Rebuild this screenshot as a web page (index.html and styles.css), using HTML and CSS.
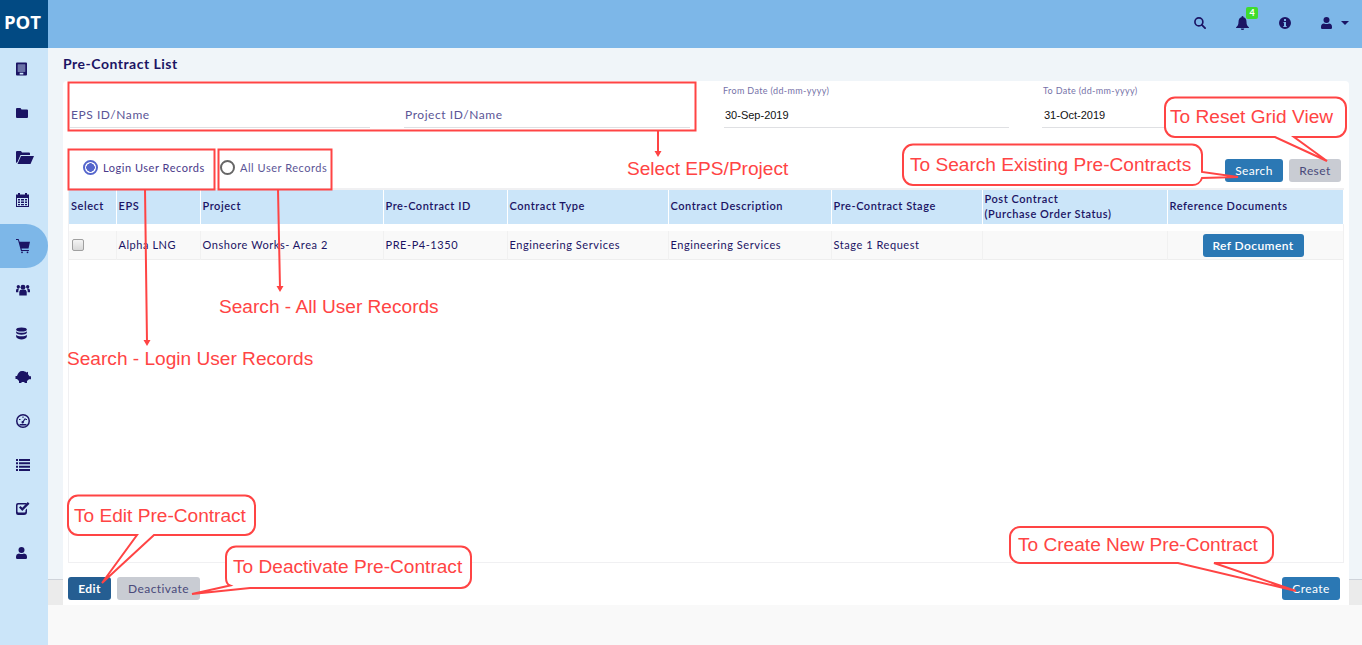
FILE: index.html
```html
<!DOCTYPE html>
<html lang="en">
<head>
<meta charset="utf-8">
<title>Pre-Contract List</title>
<link rel="stylesheet" href="styles.css">
</head>
<body>
<div class="app">
  <aside class="sidebar">
    <div class="logo">POT</div>
    <nav class="side-nav">
      <a class="side-item"><svg class="ic" viewBox="0 0 12 14"><path fill-rule="evenodd" d="M1 0h10a1 1 0 0 1 1 1v12a1 1 0 0 1-1 1H1a1 1 0 0 1-1-1V1a1 1 0 0 1 1-1zM2 2v8h8V2zM4 11v2h4v-2z"/><path d="M2 2h8v8H2z" opacity=".55"/></svg></a>
      <a class="side-item"><svg class="ic" viewBox="0 0 12 10"><path d="M1 0h3.500l1 1.500H11a1 1 0 0 1 1 1V9a1 1 0 0 1-1 1H1a1 1 0 0 1-1-1V1a1 1 0 0 1 1-1z"/></svg></a>
      <a class="side-item wide"><svg class="ic" viewBox="0 0 18 13"><path d="M1 0h4l1 1.500h7a1 1 0 0 1 1 1V4H4.500L1.500 11 0 12V1a1 1 0 0 1 1-1z"/><path d="M5 5h13l-3.500 8H1.500z"/></svg></a>
      <a class="side-item"><svg class="ic" viewBox="0 0 13 14"><path fill-rule="evenodd" d="M2 0h2v1.500h5V0h2v1.500h2V14H0V1.500h2zM1 5v8h11V5z"/><path d="M2 6h2v1.500H2zM5 6h3v1.500H5zM9 6h2v1.500H9zM2 8.500h2V10H2zM5 8.500h3V10H5zM9 8.500h2V10H9zM2 11h2v1.300H2zM5 11h3v1.300H5zM9 11h2v1.300H9z"/></svg></a>
      <a class="side-item active"><svg class="ic" viewBox="0 0 14 14"><path d="M0 0h2.600l1 2.800H14l-1.500 6.700H5.500l.4 1.500h7v1H5L2 1H0z"/><circle cx="6" cy="13.300" r=".9"/><circle cx="11.500" cy="13.300" r=".9"/></svg></a>
      <a class="side-item wide"><svg class="ic" viewBox="0 0 15 13"><circle cx="7.500" cy="4" r="2.600"/><circle cx="2.500" cy="3.500" r="1.800"/><circle cx="12.500" cy="3.500" r="1.800"/><path d="M3.500 13V9a3 3 0 0 1 3-2.500h2A3 3 0 0 1 11.500 9v4zM0 9.500V7.500a2 2 0 0 1 2-2h1.500a4 4 0 0 0-1 3v1zM15 9.500V7.500a2 2 0 0 0-2-2h-1.500a4 4 0 0 1 1 3v1z"/></svg></a>
      <a class="side-item"><svg class="ic" viewBox="0 0 12 13"><ellipse cx="6" cy="2.200" rx="5.800" ry="2.200"/><path d="M.2 4c1 1.300 3 1.800 5.800 1.800S10.800 5.300 11.800 4v2c-1 1.300-3 1.800-5.800 1.800S1.200 7.300.2 6zM.2 7.800C1.200 9 3.200 9.500 6 9.500s4.800-.5 5.800-1.700v2.600C11 12 8.500 13 6 13s-5-1-5.800-2.600z"/></svg></a>
      <a class="side-item wide"><svg class="ic" viewBox="0 0 17 12"><path d="M7 0c2 0 3.500.5 4.500 1.500L13 .8v2.500l1.500 2H16v3h-2L12 10v2H9.500v-1h-3v1H4v-2L2 8H.5V5H2C3 2 4.500 0 7 0z"/></svg></a>
      <a class="side-item"><svg class="ic" viewBox="0 0 14 14"><path fill-rule="evenodd" d="M7 0a7 7 0 1 1 0 14A7 7 0 0 1 7 0zm0 1.500a5.500 5.500 0 1 0 0 11 5.500 5.500 0 0 0 0-11z"/><path d="M6.500 2.500h1v1.500h-1zM3 5h1.500v1H3zM9.500 5H11v1H9.500zM9 4l.8.6L7.800 7.800a1.200 1.200 0 1 1-1-.7zM3.500 10h7v1.500h-7z"/></svg></a>
      <a class="side-item"><svg class="ic" viewBox="0 0 14 12"><path d="M0 0h2v2H0zM3 0h11v2H3zM0 3.300h2v2H0zM3 3.300h11v2H3zM0 6.700h2v2H0zM3 6.700h11v2H3zM0 10h2v2H0zM3 10h11v2H3z"/></svg></a>
      <a class="side-item"><svg class="ic" viewBox="0 0 14 13"><path d="M2 1h8.500v1.500H2.500a1 1 0 0 0-1 1v6a1 1 0 0 0 1 1h6a1 1 0 0 0 1-1V8L11 6.500V10a3 3 0 0 1-3 3H2a2 2 0 0 1-2-2V3a2 2 0 0 1 2-2z"/><path d="M3 5.500l1.500-1.500 1.800 1.800L11.800 0 13.500 1.700 6.300 9z"/></svg></a>
      <a class="side-item"><svg class="ic" viewBox="0 0 11 12"><circle cx="5.500" cy="3" r="3"/><path d="M0 10a3.500 3.500 0 0 1 3-3.500c1.500.8 3.500.8 5 0A3.500 3.500 0 0 1 11 10v.8A1.200 1.200 0 0 1 9.800 12H1.200A1.200 1.200 0 0 1 0 10.800z"/></svg></a>
    </nav>
  </aside>
  <div class="workspace">
    <header class="topbar">
      <svg class="top-ic search-ic" viewBox="0 0 13 13"><circle cx="5.300" cy="5.300" r="4.300" fill="none" stroke-width="1.800"/><path d="M8.500 8.500l3.500 3.500" fill="none" stroke-width="2" stroke-linecap="round"/></svg>
      <span class="bell-wrap">
        <svg class="top-ic bell-ic" viewBox="0 0 13 14"><path d="M6.500 0a1 1 0 0 1 1 1v.3C9.500 1.800 10.500 3.500 10.500 6c0 2.500.8 4 2.500 5.500V12H0v-.5C1.700 10 2.500 8.500 2.500 6c0-2.500 1-4.200 3-4.700V1a1 1 0 0 1 1-1z"/><path d="M4.800 12.500h3.400a1.700 1.500 0 0 1-3.400 0z"/></svg>
        <span class="badge">4</span>
      </span>
      <svg class="top-ic info-ic" viewBox="0 0 12 12"><path fill-rule="evenodd" d="M6 0a6 6 0 1 1 0 12A6 6 0 0 1 6 0zM5 2v2h2V2zM4.500 5v1H5v3h-.7v1h3.400V9H7V5z"/></svg>
      <span class="user-menu">
        <svg class="top-ic user-ic" viewBox="0 0 11 12"><circle cx="5.500" cy="3" r="3"/><path d="M0 10a3.500 3.500 0 0 1 3-3.500c1.500.8 3.500.8 5 0A3.500 3.500 0 0 1 11 10v.8A1.200 1.200 0 0 1 9.800 12H1.200A1.200 1.200 0 0 1 0 10.800z"/></svg>
        <span class="caret"></span>
      </span>
    </header>
    <main class="content">
      <h1 class="page-title">Pre-Contract List</h1>
      <section class="card">
        <div class="filters">
          <div class="field"><span class="field-label"></span><div class="field-value placeholder">EPS ID/Name</div></div>
          <div class="field"><span class="field-label"></span><div class="field-value placeholder">Project ID/Name</div></div>
          <div class="field"><span class="field-label">From Date (dd-mm-yyyy)</span><div class="field-value date">30-Sep-2019</div></div>
          <div class="field"><span class="field-label">To Date (dd-mm-yyyy)</span><div class="field-value date">31-Oct-2019</div></div>
        </div>
        <div class="toolbar">
          <div class="radio-group">
            <span class="radio-item login"><span class="radio checked"></span><span class="radio-text dark">Login User Records</span></span>
            <span class="radio-item all"><span class="radio"></span><span class="radio-text">All User Records</span></span>
          </div>
          <div class="actions">
            <button class="btn btn-blue btn-search">Search</button>
            <button class="btn btn-grey btn-reset">Reset</button>
          </div>
        </div>
        <div class="grid-wrap">
          <table class="grid">
            <colgroup>
              <col class="c1"><col class="c2"><col class="c3"><col class="c4"><col class="c5"><col class="c6"><col class="c7"><col class="c8"><col class="c9">
            </colgroup>
            <thead>
              <tr>
                <th>Select</th><th>EPS</th><th>Project</th><th>Pre-Contract ID</th><th>Contract Type</th><th>Contract Description</th><th>Pre-Contract Stage</th><th>Post Contract<br>(Purchase Order Status)</th><th>Reference Documents</th>
              </tr>
            </thead>
            <tbody>
              <tr>
                <td><span class="checkbox"></span></td><td>Alpha LNG</td><td>Onshore Works- Area 2</td><td>PRE-P4-1350</td><td>Engineering Services</td><td>Engineering Services</td><td>Stage 1 Request</td><td></td><td class="center"><button class="btn btn-blue btn-ref">Ref Document</button></td>
              </tr>
            </tbody>
          </table>
        </div>
        <div class="card-footer">
          <div class="footer-left">
            <button class="btn btn-navy btn-edit">Edit</button>
            <button class="btn btn-grey btn-deact">Deactivate</button>
          </div>
          <button class="btn btn-blue btn-create">Create</button>
        </div>
      </section>
    </main>
  </div>
</div>
<svg class="annotations" viewBox="0 0 1362 645" width="1362" height="645">
  <g class="shape">
    <rect x="68.500" y="82.500" width="627" height="48"/>
    <rect x="68.500" y="149.500" width="146" height="40"/>
    <rect x="218.500" y="149.500" width="113" height="40"/>
    <path d="M658 131V152M145 189L147 342M278 189L280 288"/>
    <path d="M1175 97.500H1336a10 10 0 0 1 10 10V127a10 10 0 0 1-10 10H1294L1327 161L1275 137H1175a10 10 0 0 1-10-10V107.500a10 10 0 0 1 10-10z" class="fill"/>
    <path d="M913 144.500H1192a10 10 0 0 1 10 10V172L1238 177L1202 178a10 10 0 0 1-10 7H913a10 10 0 0 1-10-10V154.500a10 10 0 0 1 10-10z" class="fill"/>
    <path d="M78 495.500H245a10 10 0 0 1 10 10V525a10 10 0 0 1-10 10H154L102 583L137 535H78a10 10 0 0 1-10-10V505.500a10 10 0 0 1 10-10z" class="fill"/>
    <path d="M236 546.500H461a10 10 0 0 1 10 10V578a10 10 0 0 1-10 10H250L192 594L230 585.500Q226 584 226 578V556.500a10 10 0 0 1 10-10z" class="fill"/>
    <path d="M1020 527H1263a10 10 0 0 1 10 10V553a10 10 0 0 1-10 10H1214L1296 591L1178 563H1020a10 10 0 0 1-10-10V537a10 10 0 0 1 10-10z" class="fill"/>
  </g>
  <g class="heads">
    <path d="M654.500 151h7L658 157zM143.500 340h7L147 346zM276.500 286h7L280 292z"/>
  </g>
  <g class="note">
    <text x="627" y="175">Select EPS/Project</text>
    <text x="219" y="313">Search - All User Records</text>
    <text x="67" y="365">Search - Login User Records</text>
    <text x="1170" y="123">To Reset Grid View</text>
    <text x="910" y="171">To Search Existing Pre-Contracts</text>
    <text x="74" y="522">To Edit Pre-Contract</text>
    <text x="233" y="573">To Deactivate Pre-Contract</text>
    <text x="1018" y="551">To Create New Pre-Contract</text>
  </g>
</svg>
</body>
</html>
```
FILE: styles.css
```css
* { box-sizing: border-box; }
html, body { margin: 0; padding: 0; }
body {
  width: 1362px;
  height: 645px;
  overflow: hidden;
  position: relative;
  background: #f9f9f9;
  font-family: Lato, "Open Sans", sans-serif;
  color: #1b1464;
}
.app { display: flex; height: 645px; }
.sidebar { width: 48px; flex: none; background: #cbe5f9; }
.logo {
  height: 48px;
  background: #024a83;
  color: #fff;
  font-size: 18.500px;
  font-weight: 700;
  line-height: 44px;
  padding-left: 4px;
  font-family: "Open Sans", sans-serif;
}
.side-nav { display: flex; flex-direction: column; }
.side-item {
  height: 44px;
  display: flex;
  align-items: center;
  padding-left: 16px;
  padding-bottom: 2px;
}
.side-item.active {
  background: #7db7e8;
  border-radius: 0 22px 22px 0;
  padding-bottom: 0;
}
.ic { width: 11px; height: 14px; fill: #1b1464; overflow: visible; }
.side-item:nth-child(2) .ic { width: 12px; height: 10px; }
.side-item:nth-child(3) .ic { width: 18px; height: 13px; }
.side-item:nth-child(4) { padding-bottom: 4px; }
.side-item:nth-child(4) .ic { width: 13px; height: 14px; }
.side-item:nth-child(5) .ic { width: 14px; height: 14px; }
.side-item:nth-child(6) .ic { width: 14px; height: 13px; }
.side-item:nth-child(7) .ic { width: 11px; height: 13px; }
.side-item:nth-child(8) .ic { width: 17px; height: 12px; margin-left: -1px; }
.side-item:nth-child(9) .ic { width: 14px; height: 14px; }
.side-item:nth-child(10) .ic { width: 14px; height: 12px; }
.side-item:nth-child(11) { padding-bottom: 4px; }
.side-item:nth-child(11) .ic { width: 14px; height: 13px; }
.side-item:nth-child(12) .ic { width: 11px; height: 12px; }

.workspace { flex: 1; display: flex; flex-direction: column; min-width: 0; }
.topbar {
  height: 48px;
  flex: none;
  background: #7db7e8;
  display: flex;
  align-items: center;
  justify-content: flex-end;
  padding-right: 13px;
  padding-bottom: 2px;
}
.top-ic { fill: #1b1464; stroke: none; display: block; }
.search-ic { width: 12px; height: 12px; margin-right: 30px; stroke: #1b1464; }
.search-ic path, .search-ic circle { stroke: #1b1464; }
.bell-wrap { position: relative; margin-right: 30px; }
.bell-ic { width: 13px; height: 14px; }
.badge {
  position: absolute;
  left: 10px;
  top: -9px;
  width: 12px;
  height: 12px;
  background: #3fdc2c;
  border-radius: 2px;
  color: #fff;
  font-size: 9px;
  font-weight: 700;
  line-height: 12px;
  text-align: center;
}
.info-ic { width: 12px; height: 12px; margin-right: 30px; }
.user-menu { display: flex; align-items: center; }
.user-ic { width: 11px; height: 12px; }
.caret {
  margin-left: 9px;
  width: 0;
  height: 0;
  border-left: 4px solid transparent;
  border-right: 4px solid transparent;
  border-top: 4px solid #1b1464;
}

.content {
  height: 557px;
  flex: none;
  padding: 0 13px 0 15px;
  display: flex;
  flex-direction: column;
  background: linear-gradient(#f0f5f9 0, #f0f5f9 531px, #cfd3da 531px, #cfd3da 532px, #ebebeb 532px);
}
.page-title {
  margin: 0;
  height: 33px;
  font-size: 14px;
  font-weight: 700;
  line-height: 32px;
  letter-spacing: .5px;
  color: #1b1464;
}
.card {
  flex: 1;
  background: #fff;
  border-radius: 4px 4px 0 0;
  display: flex;
  flex-direction: column;
  padding: 0 5px;
}
.filters {
  display: flex;
  padding-left: 2px;
  height: 47px;
}
.field { flex: none; width: 285px; margin-left: 33px; display: flex; flex-direction: column; justify-content: flex-end; border-bottom: 1px solid #dfe0e3; }
.field:nth-child(1) { width: 300px; margin-left: 0; }
.field:nth-child(2) { width: 286px; margin-left: 34px; }
.field:nth-child(3) { margin-left: 34px; }
.field-label { font-size: 9px; color: #7672a8; height: 18px; line-height: 20px; letter-spacing: .35px; margin-left: -1px; }
.field:nth-child(4) .field-label { margin-left: 1px; }
.field:nth-child(4) .field-value { padding-left: 2px; }
.field-value { height: 28px; line-height: 32px; padding-left: 1px; }
.placeholder { font-size: 12px; color: #5b5596; letter-spacing: .55px; }
.date { font-family: "Liberation Sans", sans-serif; font-size: 11px; color: #111; }
.toolbar { height: 60px; display: flex; justify-content: space-between; }
.radio-group { display: flex; align-items: center; padding-top: 19px; }
.radio-item { display: flex; align-items: center; font-size: 11px; }
.radio-item.login { margin-left: 15px; width: 137px; }
.radio { width: 15px; height: 15px; border-radius: 50%; border: 2px solid #666; background: #fff; margin-right: 5px; flex: none; }
.radio.checked { border-color: #5566cc; background: radial-gradient(circle, #5566cc 0, #5566cc 4px, #fff 4.500px); }
.radio-text { color: #5b5596; letter-spacing: .53px; }
.radio-text.dark { color: #4a3a8a; }
.actions { display: flex; gap: 6px; align-items: flex-start; padding-top: 31px; padding-right: 3px; }
.btn {
  border: 0;
  border-radius: 3px;
  font-family: Lato, sans-serif;
  font-size: 12px;
  height: 23px;
  padding: 0;
  letter-spacing: .4px;
}
.btn-blue { background: #2b78b4; color: #fff; }
.btn-navy { background: #255e92; color: #fff; font-weight: 700; }
.btn-grey { background: #c9ccd3; color: #4a4a7a; }
.btn-search { width: 58px; }
.btn-reset { width: 52px; }
.btn-ref { width: 101px; font-weight: 600; }
.btn-edit { width: 43px; }
.btn-deact { width: 83px; }
.btn-create { width: 58px; }

.grid-wrap {
  height: 375px;
  border: 1px solid #f0f0f2;
  border-top-width: 2px;
}
.grid { width: 1274px; border-collapse: collapse; table-layout: fixed; font-size: 11px; letter-spacing: .55px; }
.c1 { width: 47px; } .c2 { width: 84px; } .c3 { width: 183px; } .c4 { width: 124px; } .c5 { width: 161px; }
.c6 { width: 163px; } .c7 { width: 151px; } .c8 { width: 185px; } .c9 { width: 176px; }
.grid thead tr { height: 34px; background: #cbe5f9; }
.grid th {
  text-align: left;
  font-weight: 600;
  line-height: 15px;
  padding: 0 2px 3px;
  border-right: 1px solid #fff;
  color: #1b1464;
}
.grid tbody::before { content: ""; display: block; height: 7px; }
.grid tbody tr { height: 28px; background: #f9f9f9; border-bottom: 1px solid #eee; }
.grid td { padding: 0 2px; color: #1b1464; border-right: 1px solid #f1f1f1; white-space: nowrap; }
.grid td.center { text-align: center; padding: 1px 6px 0 2px; }
.checkbox {
  display: block;
  margin-left: 1px;
  width: 12px;
  height: 12px;
  border: 1px solid #a0a0a0;
  border-radius: 2px;
  background: linear-gradient(#f4f4f4, #d8d8d8);
}
.card-footer { flex: 1; display: flex; justify-content: space-between; padding: 14px 4px 0 0; }
.footer-left { display: flex; gap: 6px; align-items: flex-start; }

.annotations { position: absolute; left: 0; top: 0; pointer-events: none; }
.shape path, .shape rect { fill: none; stroke: #ff4444; stroke-width: 2; }
.shape .fill { fill: #fff; }
.heads path { fill: #ff4444; }
.note text { font-family: "Liberation Sans", Arial, sans-serif; font-size: 19.100px; fill: #ff4444; }
```
